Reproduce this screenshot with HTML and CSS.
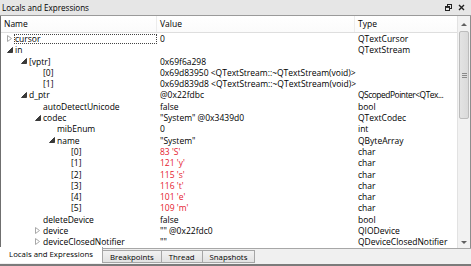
FILE: index.html
```html
<!DOCTYPE html>
<html lang="en">

<head>
    <meta charset="UTF-8">
    <title>Locals and Expressions</title>
    <link rel="stylesheet" href="styles.css">
</head>

<body>
    <div class="dock">
        <div class="titlebar">
            <span class="title">Locals and Expressions</span>
            <div class="title-buttons">
                <svg width="7" height="7" viewBox="0 0 7 7">
                    <rect x="2.5" y="0.5" width="4" height="4" fill="none" stroke="#222" />
                    <rect x="0.5" y="2.5" width="4" height="4" fill="#e6e6e6" stroke="#222" />
                    <line x1="0.5" y1="3.2" x2="4.5" y2="3.2" stroke="#222" stroke-width="1.4" />
                </svg>
                <svg width="7" height="7" viewBox="0 0 7 7">
                    <path d="M1 1 L6 6 M6 1 L1 6" stroke="#222" stroke-width="1.4" />
                </svg>
            </div>
        </div>

        <div class="view">
            <div class="tree">
                <div class="header">
                    <div class="hcell">Name</div>
                    <div class="hcell">Value</div>
                    <div class="hcell">Type</div>
                </div>
                <div class="rows" id="rows"></div>
            </div>
            <div class="scrollbar">
                <div class="sb-arrow up"></div>
                <div class="sb-track">
                    <div class="sb-thumb"><span class="grip"></span></div>
                </div>
                <div class="sb-arrow down"></div>
            </div>
        </div>

        <div class="tabs">
            <div class="tab active">Locals and Expressions</div>
            <div class="tab">Breakpoints</div>
            <div class="tab">Thread</div>
            <div class="tab">Snapshots</div>
        </div>
    </div>

    <script>
        // level, state (c = collapsed, e = expanded, '' = leaf), name, value, type, changed
        const items = [
            [0, 'c', 'cursor', '0', 'QTextCursor'],
            [0, 'e', 'in', '', 'QTextStream'],
            [1, 'e', '[vptr]', '0x69f6a298', ''],
            [2, '', '[0]', '0x69d83950 <QTextStream::~QTextStream(void)>', ''],
            [2, '', '[1]', '0x69d839d8 <QTextStream::~QTextStream(void)>', ''],
            [1, 'e', 'd_ptr', ' @0x22fdbc', 'QScopedPointer<QTex...'],
            [2, '', 'autoDetectUnicode', 'false', 'bool'],
            [2, 'e', 'codec', '"System" @0x3439d0', 'QTextCodec'],
            [3, '', 'mibEnum', '0', 'int'],
            [3, 'e', 'name', '"System"', 'QByteArray'],
            [4, '', '[0]', "83 'S'", 'char', true],
            [4, '', '[1]', "121 'y'", 'char', true],
            [4, '', '[2]', "115 's'", 'char', true],
            [4, '', '[3]', "116 't'", 'char', true],
            [4, '', '[4]', "101 'e'", 'char', true],
            [4, '', '[5]', "109 'm'", 'char', true],
            [2, '', 'deleteDevice', 'false', 'bool'],
            [2, 'c', 'device', '"" @0x22fdc0', 'QIODevice'],
            [2, 'c', 'deviceClosedNotifier', '""', 'QDeviceClosedNotifier']
        ];

        const rows = document.getElementById('rows');
        const arrows = {
            c: '<svg width="5" height="7" viewBox="0 0 5 7"><path d="M0.5 0.5 L4.5 3.5 L0.5 6.5 Z" fill="#fff" stroke="#a8a8a8" /></svg>',
            e: '<svg width="6" height="6" viewBox="0 0 6 6"><path d="M5.5 0.5 L5.5 5.5 L0.5 5.5 Z" fill="#3a3a3a" stroke="#3a3a3a" /></svg>'
        };

        items.forEach((item, index) => {
            const [level, state, name, value, type, changed] = item;
            const row = document.createElement('div');
            row.classList.add('row');
            row.innerHTML =
                `<div class="cell name level-${level}">` +
                `<span class="arrow">${arrows[state] || ''}</span>` +
                `<span class="label${index === 0 ? ' focused' : ''}"></span></div>` +
                `<div class="cell value${changed ? ' changed' : ''}"></div>` +
                `<div class="cell type${type.endsWith('...') ? ' elided' : ''}"></div>`;
            row.querySelector('.label').textContent = name;
            row.querySelector('.value').textContent = value;
            row.querySelector('.type').textContent = type;
            rows.appendChild(row);
        });
    </script>
</body>

</html>
```

FILE: styles.css
```css
body,
html {
    margin: 0;
    padding: 0;
    background: #fff;
    font-family: 'Open Sans', 'Liberation Sans', sans-serif;
    font-size: 8.5px;
    color: #000;
    overflow: hidden;
}

.dock {
    width: 471px;
    height: 266px;
    display: flex;
    flex-direction: column;
}

.titlebar {
    height: 16px;
    flex: none;
    display: flex;
    align-items: center;
    justify-content: space-between;
    padding: 0 6px 0 2px;
    background: #e6e6e6;
    border-bottom: 1px solid #9a9a9a;
    box-sizing: border-box;
}

.title {
    font-size: 8.1px;
    white-space: nowrap;
}

.title-buttons {
    display: flex;
    gap: 6px;
    align-items: center;
}

.title-buttons svg {
    display: block;
}

.view {
    flex: 1;
    display: flex;
    min-height: 0;
    border-left: 1px solid #6f6f6f;
}

.tree {
    flex: 1;
    min-width: 0;
    overflow: hidden;
}

.header {
    height: 17px;
    display: grid;
    grid-template-columns: 156px 198px 1fr;
    background: linear-gradient(#ffffff, #fbfbfb);
    border-bottom: 1px solid #dedede;
    box-sizing: border-box;
}

.hcell {
    padding-left: 3px;
    line-height: 16px;
    border-right: 1px solid #ececec;
    font-size: 8.5px;
}

.hcell:last-child {
    border-right: none;
}

.row {
    height: 11.3px;
    display: grid;
    grid-template-columns: 156px 198px 1fr;
    line-height: 11.3px;
    white-space: nowrap;
}

.cell {
    overflow: visible;
}

.cell.value,
.cell.type {
    padding-left: 3px;
}

.cell.type {
    overflow: hidden;
}

.cell.type.elided {
    font-size: 8.4px;
    letter-spacing: -0.45px;
}

.cell.name {
    display: flex;
    align-items: center;
}

.level-0 { padding-left: 5px; }
.level-1 { padding-left: 19px; }
.level-2 { padding-left: 33px; }
.level-3 { padding-left: 47px; }
.level-4 { padding-left: 61px; }

.arrow {
    width: 9px;
    flex: none;
    display: flex;
    align-items: center;
}

.arrow svg {
    display: block;
    margin-left: 1px;
}

.label.focused {
    flex: 1;
    height: 10px;
    line-height: 10px;
    outline: 1px dotted #444;
    outline-offset: -1px;
    padding-left: 1px;
    margin-left: -1px;
}

.cell.changed {
    color: #e5202e;
}

.scrollbar {
    width: 14px;
    flex: none;
    display: flex;
    flex-direction: column;
    background: #f2f2f2;
    border-left: 1px solid #e2e2e2;
    border-right: 1px solid #8d8d8d;
    box-sizing: border-box;
    padding-top: 2px;
}

.sb-arrow {
    height: 12px;
    flex: none;
    display: flex;
    align-items: center;
    justify-content: center;
}

.sb-arrow.up::before {
    content: '';
    border-left: 3px solid transparent;
    border-right: 3px solid transparent;
    border-bottom: 3px solid #606060;
}

.sb-arrow.down::before {
    content: '';
    border-left: 3px solid transparent;
    border-right: 3px solid transparent;
    border-top: 3px solid #606060;
}

.sb-track {
    flex: 1;
    padding: 1px 1px;
}

.sb-thumb {
    height: 86px;
    background: linear-gradient(90deg, #e3e3e3, #dadada);
    border: 1px solid #bcbcbc;
    border-radius: 2px;
    display: flex;
    align-items: center;
    justify-content: center;
}

.grip {
    width: 5px;
    height: 5px;
    background: repeating-linear-gradient(#8a8a8a 0, #8a8a8a 1px, transparent 1px, transparent 2px);
}

.tabs {
    height: 18px;
    flex: none;
    display: flex;
    align-items: flex-end;
    background: #f0f0f0;
    border-top: 1px solid #a7a7a7;
    border-bottom: 2px solid #7b7b7b;
    box-sizing: border-box;
    padding-bottom: 1px;
}

.tab {
    height: 13px;
    line-height: 13px;
    padding: 0 7px;
    font-size: 7.8px;
    white-space: nowrap;
    background: linear-gradient(#f2f2f2, #e2e2e2);
    border: 1px solid #a6a6a6;
    border-left: none;
    box-sizing: border-box;
}

.tab.active {
    height: 16px;
    line-height: 15px;
    margin-top: -1px;
    width: 103px;
    background: #fff;
    border: none;
    border-right: 1px solid #a6a6a6;
    text-align: center;
    padding: 0;
}
```
